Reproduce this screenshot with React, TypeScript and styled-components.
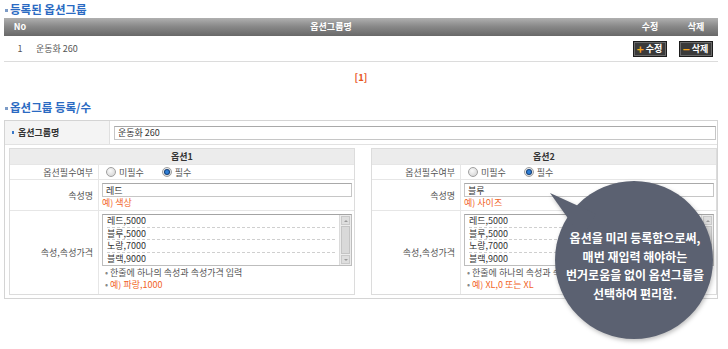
import React from 'react';
import styled, { createGlobalStyle, css } from 'styled-components';

const GlobalStyle = createGlobalStyle`
  html, body { margin: 0; padding: 0; background: #fff; }
  body {
    font-family: "Noto Sans CJK KR", "Noto Sans", sans-serif;
    font-size: 9px;
    color: #444;
  }
`;

const Page = styled.div`
  position: relative;
  box-sizing: border-box;
  width: 728px;
  height: 349px;
  padding: 0 10px 0 4px;
  overflow: hidden;
`;

const Title = styled.h2`
  margin: 0;
  height: 18px;
  display: flex;
  align-items: center;
  gap: 2px;
  font-size: 11.5px;
  font-weight: bold;
  color: #2a6ac2;
  line-height: 18px;

  &::before {
    content: '';
    width: 3px;
    height: 3px;
    margin: 2px 0 0 1px;
    background: #7d9cc7;
  }
`;

const cols = '32px 590px 48px 44px';

const HeadRow = styled.div`
  display: grid;
  grid-template-columns: ${cols};
  align-items: center;
  height: 18px;
  background: linear-gradient(to bottom, #b0b0b0 0%, #8a8a8a 45%, #686868 100%);
  color: #fff;
  font-weight: bold;
`;

const Cell = styled.div<{ $align?: string }>`
  text-align: ${p => p.$align || 'center'};
  line-height: 12px;
`;

const BodyRow = styled.div`
  display: grid;
  grid-template-columns: ${cols};
  align-items: center;
  box-sizing: border-box;
  height: 26px;
  border-bottom: 1px solid #dcdcdc;
  color: #555;
`;

const ActionButton = styled.button<{ $sign: 'plus' | 'minus' }>`
  justify-self: center;
  display: inline-flex;
  align-items: center;
  gap: 2px;
  height: 16px;
  padding: 0 4px 0 3px;
  border: 1px solid #1c1c1c;
  box-shadow: inset 0 0 0 1px #6a6a6a;
  background: #3a3a3a;
  color: #fff;
  font: bold 9px "Noto Sans CJK KR", sans-serif;
  cursor: pointer;

  &::before {
    content: '${p => (p.$sign === 'plus' ? '+' : '−')}';
    color: #f7a51c;
    font-size: 12px;
    line-height: 12px;
    font-weight: bold;
  }
`;

const Pager = styled.div`
  height: 36px;
  box-sizing: border-box;
  padding-top: 9px;
  text-align: center;
  line-height: 12px;
  color: #e8541e;
  font-weight: bold;
  font-size: 9.5px;
`;

const Form = styled.div`
  margin-top: 4px;
  border: 1px solid #d4d4d4;
`;

const NameRow = styled.div`
  display: flex;
  height: 23px;
`;

const NameLabel = styled.div`
  width: 105px;
  flex: none;
  display: flex;
  align-items: center;
  gap: 4px;
  padding-left: 7px;
  box-sizing: border-box;
  background: #f4f4f4;
  border-right: 1px solid #e0e0e0;
  color: #333;
  font-weight: bold;

  &::before {
    content: '';
    width: 2px;
    height: 3px;
    background: #3b78c8;
  }
`;

const NameBody = styled.div`
  flex: 1;
  display: flex;
  align-items: center;
  padding: 0 1px 0 4px;
`;

const TextInput = styled.input`
  box-sizing: border-box;
  width: 100%;
  height: 14px;
  padding: 0 3px;
  border: 1px solid #c6c6c6;
  border-top-color: #a9a9a9;
  font: 9px "Noto Sans CJK KR", sans-serif;
  color: #333;
  outline: none;
`;

const OptionArea = styled.div`
  display: flex;
  gap: 16px;
  padding: 3px 0 3px 4px;
  border-top: 1px solid #e2e2e2;
`;

const Panel = styled.div`
  flex: 1;
  border: 1px solid #dcdcdc;
`;

const PanelHead = styled.div`
  height: 15px;
  line-height: 15px;
  background: #ececec;
  text-align: center;
  font-weight: bold;
  color: #333;
`;

const FieldRow = styled.div<{ $h: number }>`
  display: flex;
  box-sizing: border-box;
  height: ${p => p.$h}px;
  border-top: 1px solid #e6e6e6;
`;

const FieldLabel = styled.div`
  width: 89px;
  flex: none;
  box-sizing: border-box;
  display: flex;
  align-items: center;
  justify-content: flex-end;
  padding-right: 5px;
  border-right: 1px solid #e6e6e6;
  color: #555;
`;

const FieldBody = styled.div<{ $radio?: boolean }>`
  flex: 1;
  min-width: 0;
  ${p =>
    p.$radio
      ? css`
          display: flex;
          align-items: center;
          padding-left: 7px;
        `
      : css`
          padding: 3px 2px 0 3px;
        `}
`;

const RadioOption = styled.label`
  display: inline-flex;
  align-items: center;
  gap: 3px;
  margin-right: 18px;
  color: #555;
`;

const Radio = styled.span<{ $on?: boolean }>`
  position: relative;
  display: inline-block;
  width: 10px;
  height: 10px;
  box-sizing: border-box;
  border-radius: 50%;
  border: 1px solid #a0a0a0;
  background: radial-gradient(circle at 40% 35%, #fafafa, #cfcfcf);

  ${p =>
    p.$on &&
    css`
      &::after {
        content: '';
        position: absolute;
        left: 2px;
        top: 2px;
        width: 4px;
        height: 4px;
        border-radius: 50%;
        background: #2f7fd6;
        box-shadow: 0 0 0 1px #123f7a;
      }
    `}
`;

const Hint = styled.div<{ $dot?: boolean; $warm?: boolean }>`
  line-height: 12px;
  color: ${p => (p.$warm ? '#f1641f' : '#555')};
  ${p =>
    p.$dot &&
    css`
      padding-left: 3px;
      &::before {
        content: '•';
        color: #888;
        margin-right: 2px;
      }
    `}
`;

const TextBox = styled.div`
  display: flex;
  height: 52px;
  box-sizing: border-box;
  border: 1px solid #bdbdbd;
  border-top-color: #a4a4a4;
  margin-bottom: 1px;
`;

const Lines = styled.div`
  flex: 1;
  padding: 0 4px;
`;

const Line = styled.div`
  height: 12.5px;
  line-height: 12.5px;
  box-sizing: border-box;
  color: #333;
  border-bottom: 1px dashed #cfcfcf;

  &:last-child {
    border-bottom: none;
  }
`;

const ScrollBar = styled.div`
  width: 12px;
  flex: none;
  display: flex;
  flex-direction: column;
  gap: 1px;
  padding: 1px;
  box-sizing: border-box;
  background: #ececec;
  border-left: 1px solid #dadada;
`;

const ScrollBtn = styled.div<{ $dir: 'up' | 'down' }>`
  height: 9px;
  flex: none;
  display: flex;
  align-items: center;
  justify-content: center;
  background: #dedede;
  border: 1px solid #c9c9c9;
  box-sizing: border-box;

  &::before {
    content: '';
    border-left: 2px solid transparent;
    border-right: 2px solid transparent;
    ${p =>
      p.$dir === 'up'
        ? css`border-bottom: 2px solid #9a9a9a;`
        : css`border-top: 2px solid #9a9a9a;`}
  }
`;

const ScrollThumb = styled.div`
  flex: 1;
  background: #d9d9d9;
  border: 1px solid #c4c4c4;
`;

const Bubble = styled.div`
  position: absolute;
  left: 540px;
  top: 180px;
  width: 190px;
  height: 169px;
  box-sizing: border-box;
  padding-top: 49px;
  text-align: center;
  color: #fff;
  font-size: 12px;
  font-weight: bold;
  line-height: 18.5px;

  svg {
    position: absolute;
    left: 0;
    top: 0;
    z-index: 0;
    filter: drop-shadow(1px 2px 2px rgba(0, 0, 0, 0.25));
  }
`;

const BubbleText = styled.p`
  position: relative;
  margin: 0;
  z-index: 1;
`;

type OptionData = {
  title: string;
  name: string;
  nameHint: string;
  values: string[];
  valueHint: string;
};

const options: OptionData[] = [
  {
    title: '옵션1',
    name: '레드',
    nameHint: '예) 색상',
    values: ['레드,5000', '블루,5000', '노랑,7000', '블랙,9000'],
    valueHint: '예) 파랑,1000',
  },
  {
    title: '옵션2',
    name: '블루',
    nameHint: '예) 사이즈',
    values: ['레드,5000', '블루,5000', '노랑,7000', '블랙,9000'],
    valueHint: '예) XL,0 또는 XL',
  },
];

function OptionPanel({ option }: { option: OptionData }) {
  return (
    <Panel>
      <PanelHead>{option.title}</PanelHead>
      <FieldRow $h={15}>
        <FieldLabel>옵션필수여부</FieldLabel>
        <FieldBody $radio>
          <RadioOption>
            <Radio />
            미필수
          </RadioOption>
          <RadioOption>
            <Radio $on />
            필수
          </RadioOption>
        </FieldBody>
      </FieldRow>
      <FieldRow $h={31}>
        <FieldLabel>속성명</FieldLabel>
        <FieldBody>
          <TextInput readOnly value={option.name} />
          <Hint $warm>{option.nameHint}</Hint>
        </FieldBody>
      </FieldRow>
      <FieldRow $h={84}>
        <FieldLabel>속성,속성가격</FieldLabel>
        <FieldBody>
          <TextBox>
            <Lines>
              {option.values.map(v => (
                <Line key={v}>{v}</Line>
              ))}
            </Lines>
            <ScrollBar>
              <ScrollBtn $dir="up" />
              <ScrollThumb />
              <ScrollBtn $dir="down" />
            </ScrollBar>
          </TextBox>
          <Hint $dot>한줄에 하나의 속성과 속성가격 입력</Hint>
          <Hint $dot $warm>{option.valueHint}</Hint>
        </FieldBody>
      </FieldRow>
    </Panel>
  );
}

export default function App() {
  return (
    <Page>
      <GlobalStyle />
      <Title>등록된 옵션그룹</Title>
      <HeadRow>
        <Cell>No</Cell>
        <Cell>옵션그룹명</Cell>
        <Cell>수정</Cell>
        <Cell>삭제</Cell>
      </HeadRow>
      <BodyRow>
        <Cell>1</Cell>
        <Cell $align="left">운동화 260</Cell>
        <ActionButton $sign="plus">수정</ActionButton>
        <ActionButton $sign="minus">삭제</ActionButton>
      </BodyRow>
      <Pager>[1]</Pager>

      <Title>옵션그룹 등록/수</Title>
      <Form>
        <NameRow>
          <NameLabel>옵션그룹명</NameLabel>
          <NameBody>
            <TextInput readOnly value="운동화 260" />
          </NameBody>
        </NameRow>
        <OptionArea>
          {options.map(o => (
            <OptionPanel key={o.title} option={o} />
          ))}
        </OptionArea>
      </Form>

      <Bubble>
        <svg width="190" height="169" viewBox="0 0 190 169">
          <circle cx="94" cy="80" r="79" fill="#5b6171" />
          <polygon points="10,13 56,34 42,58" fill="#5b6171" />
        </svg>
        <BubbleText>
          옵션을 미리 등록함으로써,
          <br />
          매번 재입력 해야하는
          <br />
          번거로움을 없이 옵션그룹을
          <br />
          선택하여 편리함.
        </BubbleText>
      </Bubble>
    </Page>
  );
}
